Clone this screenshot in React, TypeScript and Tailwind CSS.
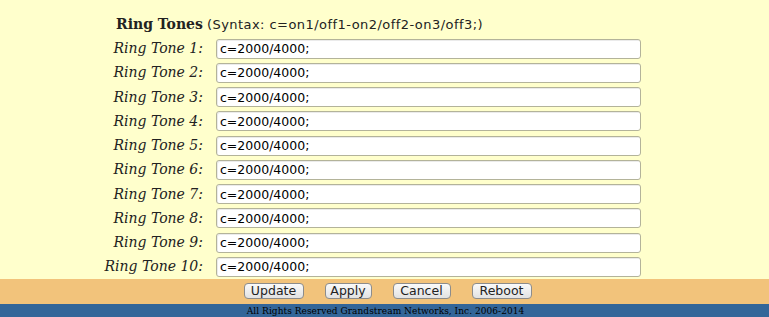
const tones = Array.from({ length: 10 }, (_, i) => i + 1);

const buttons = [
  { label: "Update", w: "w-[60px]" },
  { label: "Apply", w: "w-[47px]" },
  { label: "Cancel", w: "w-[58px]" },
  { label: "Reboot", w: "w-[60px]" },
];

function App() {
  return (
    <div className="w-[769px] h-[317px] flex flex-col bg-[#ffffcc]">
      <div className="h-[279px] pl-[104px] pt-[14px]">
        <div className="flex items-baseline h-[22px] pl-[12px]">
          <span className="font-['DejaVu_Serif',serif] font-bold text-[14px] text-[#222]">Ring Tones</span>
          <span className="ml-[4px] font-['DejaVu_Sans',sans-serif] text-[13px] tracking-[0.45px] text-[#222]">
            (Syntax: c=on1/off1-on2/off2-on3/off3;)
          </span>
        </div>
        <div className="mt-[2.5px] flex flex-col gap-[4.25px]">
          {tones.map((n) => (
            <div key={n} className="flex items-center h-[20px]">
              <label className="w-[100px] pr-[1px] text-right font-['DejaVu_Serif',serif] italic text-[14px] text-[#222]">
                Ring Tone {n}:
              </label>
              <input
                type="text"
                defaultValue="c=2000/4000;"
                className="ml-[12px] w-[425px] h-[20px] px-[3px] rounded-[3px] border border-[#b3b39a] bg-white font-['DejaVu_Sans',sans-serif] text-[12.5px] text-black outline-none shadow-[inset_1px_1px_0_0_rgba(0,0,0,0.08)]"
              />
            </div>
          ))}
        </div>
      </div>
      <div className="h-[25px] bg-[#f2c37b] flex justify-center gap-[21px] pt-[4px] pl-[6px]">
        {buttons.map((b) => (
          <button
            key={b.label}
            className={`${b.w} h-[16px] rounded-[4px] border border-[#8c8c8c] bg-gradient-to-b from-[#fafafa] to-[#e2e2e2] font-['DejaVu_Sans',sans-serif] text-[12.5px] leading-[14px] text-[#222]`}
          >
            {b.label}
          </button>
        ))}
      </div>
      <div className="flex-1 bg-[#336699] flex items-center justify-center pl-[2px]">
        <span className="font-['DejaVu_Serif',serif] [font-stretch:condensed] text-[10px] tracking-[0.05px] leading-none text-black">
          All Rights Reserved Grandstream Networks, Inc. 2006-2014
        </span>
      </div>
    </div>
  );
}

export default App;
